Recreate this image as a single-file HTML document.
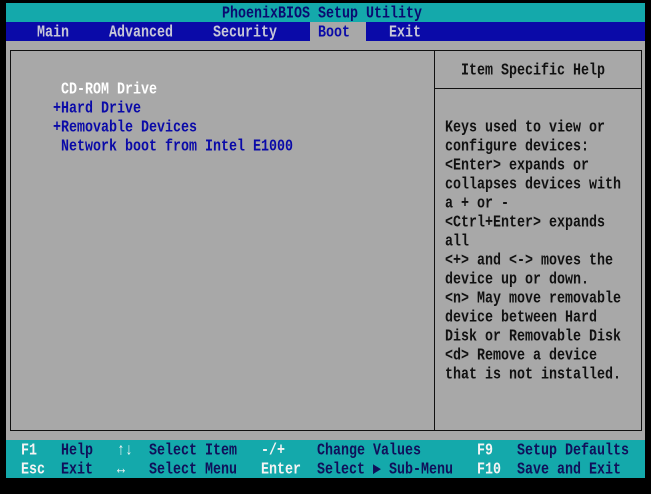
<!DOCTYPE html>
<html><head><style>
body{margin:0;width:651px;height:494px;background:#000;overflow:hidden;position:relative;font-family:"Liberation Mono",monospace;font-size:13.33px;font-weight:bold;}
div{position:absolute;}
.t{white-space:pre;line-height:19px;height:19px;transform:translateY(2px) scaleY(1.25);transform-origin:50% 50%;}
</style></head><body>
<div style="left:6px;top:3px;width:639px;height:19px;background:#14a9ab"></div>
<div style="left:6px;top:22px;width:639px;height:19px;background:#0a0aa8"></div>
<div style="left:6px;top:41px;width:639px;height:399px;background:#a8a8a8"></div>
<div style="left:310px;top:22px;width:56px;height:19px;background:#a8a8a8"></div>
<div style="left:10px;top:50px;width:630px;height:379px;border:1px solid #111"></div>
<div style="left:434px;top:50px;width:1px;height:380px;background:#111"></div>
<div style="left:434px;top:88px;width:207px;height:1px;background:#111"></div>
<div style="left:6px;top:440px;width:639px;height:38px;background:#14a9ab"></div>

<div class="t" style="left:222px;top:3px;color:#0a0a70">PhoenixBIOS Setup Utility</div>
<div class="t" style="left:37px;top:22px;color:#c8c8d8">Main</div>
<div class="t" style="left:109px;top:22px;color:#c8c8d8">Advanced</div>
<div class="t" style="left:213px;top:22px;color:#c8c8d8">Security</div>
<div class="t" style="left:318px;top:22px;color:#0a0aa8">Boot</div>
<div class="t" style="left:389px;top:22px;color:#c8c8d8">Exit</div>

<div class="t" style="left:61px;top:79px;color:#fff">CD-ROM Drive</div>
<div class="t" style="left:53px;top:98px;color:#0a0aa8">+Hard Drive</div>
<div class="t" style="left:53px;top:117px;color:#0a0aa8">+Removable Devices</div>
<div class="t" style="left:61px;top:136px;color:#0a0aa8">Network boot from Intel E1000</div>

<div class="t" style="left:461px;top:60px;color:#111">Item Specific Help</div>
<div class="t" style="left:445px;top:117px;color:#111">Keys used to view or</div>
<div class="t" style="left:445px;top:136px;color:#111">configure devices:</div>
<div class="t" style="left:445px;top:155px;color:#111">&lt;Enter&gt; expands or</div>
<div class="t" style="left:445px;top:174px;color:#111">collapses devices with</div>
<div class="t" style="left:445px;top:193px;color:#111">a + or -</div>
<div class="t" style="left:445px;top:212px;color:#111">&lt;Ctrl+Enter&gt; expands</div>
<div class="t" style="left:445px;top:231px;color:#111">all</div>
<div class="t" style="left:445px;top:250px;color:#111">&lt;+&gt; and &lt;-&gt; moves the</div>
<div class="t" style="left:445px;top:269px;color:#111">device up or down.</div>
<div class="t" style="left:445px;top:288px;color:#111">&lt;n&gt; May move removable</div>
<div class="t" style="left:445px;top:307px;color:#111">device between Hard</div>
<div class="t" style="left:445px;top:326px;color:#111">Disk or Removable Disk</div>
<div class="t" style="left:445px;top:345px;color:#111">&lt;d&gt; Remove a device</div>
<div class="t" style="left:445px;top:364px;color:#111">that is not installed.</div>

<div class="t" style="left:21px;top:440px;color:#f4f4f4">F1</div>
<div class="t" style="left:61px;top:440px;color:#10105a">Help</div>
<div class="t" style="left:117px;top:440px;color:#f4f4f4">↑↓</div>
<div class="t" style="left:149px;top:440px;color:#10105a">Select Item</div>
<div class="t" style="left:261px;top:440px;color:#f4f4f4">-/+</div>
<div class="t" style="left:317px;top:440px;color:#10105a">Change Values</div>
<div class="t" style="left:477px;top:440px;color:#f4f4f4">F9</div>
<div class="t" style="left:517px;top:440px;color:#10105a">Setup Defaults</div>
<div class="t" style="left:21px;top:459px;color:#f4f4f4">Esc</div>
<div class="t" style="left:61px;top:459px;color:#10105a">Exit</div>
<div class="t" style="left:117px;top:459px;color:#f4f4f4">↔</div>
<div class="t" style="left:149px;top:459px;color:#10105a">Select Menu</div>
<div class="t" style="left:261px;top:459px;color:#f4f4f4">Enter</div>
<div class="t" style="left:317px;top:459px;color:#10105a">Select ▶ Sub-Menu</div>
<div class="t" style="left:477px;top:459px;color:#f4f4f4">F10</div>
<div class="t" style="left:517px;top:459px;color:#10105a">Save and Exit</div>
</body></html>
